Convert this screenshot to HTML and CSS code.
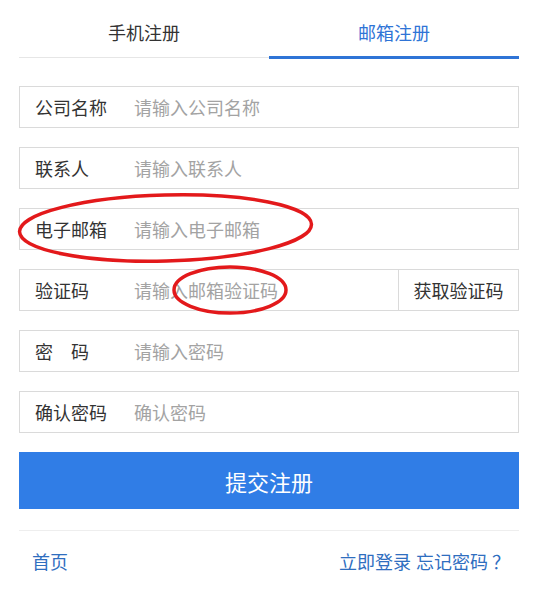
FILE: index.html
```html
<!DOCTYPE html>
<html lang="zh-CN">
    <head>
        <meta charset="UTF-8" />
        <meta name="viewport" content="width=device-width, initial-scale=1.0" />
        <title>注册</title>
        <link rel="stylesheet" href="styles.css">
    </head>

    <body>
        <div class="page">
            <div class="tabs">
                <div class="tab">手机注册</div>
                <div class="tab tab_active">邮箱注册</div>
            </div>

            <form class="form">
                <div class="row">
                    <label class="row_label">公司名称</label>
                    <input class="row_input" type="text" placeholder="请输入公司名称" />
                </div>
                <div class="row">
                    <label class="row_label">联系人</label>
                    <input class="row_input" type="text" placeholder="请输入联系人" />
                </div>
                <div class="row">
                    <label class="row_label">电子邮箱</label>
                    <input class="row_input" type="text" placeholder="请输入电子邮箱" />
                </div>
                <div class="row">
                    <label class="row_label">验证码</label>
                    <input class="row_input" type="text" placeholder="请输入邮箱验证码" />
                    <button class="btn_code" type="button">获取验证码</button>
                </div>
                <div class="row">
                    <label class="row_label">密　码</label>
                    <input class="row_input" type="password" placeholder="请输入密码" />
                </div>
                <div class="row">
                    <label class="row_label">确认密码</label>
                    <input class="row_input" type="password" placeholder="确认密码" />
                </div>

                <button class="btn_submit" type="button">提交注册</button>
            </form>

            <div class="footer">
                <a href="#" class="link">首页</a>
                <div class="links">
                    <a href="#" class="link">立即登录</a>
                    <a href="#" class="link">忘记密码 ？</a>
                </div>
            </div>
        </div>

        <!-- marcações em vermelho por cima da tela -->
        <svg class="marks" width="535" height="609" viewBox="0 0 535 609">
            <ellipse cx="165.5" cy="228" rx="146" ry="33" transform="rotate(-1.5 165.5 228)" />
            <ellipse cx="230" cy="290" rx="56" ry="23" />
        </svg>
    </body>
</html>
```

FILE: styles.css
```css
* {
    box-sizing: border-box;
}

body {
    margin: 0;
    background-color: #fff;
    font-family: "Noto Sans CJK SC", "Noto Sans", sans-serif;
    color: #333;
}

.page {
    padding: 0 16px 0 19px;
}

.tabs {
    display: flex;
    height: 59px;
}

.tab {
    flex: 1;
    height: 58px;
    padding-top: 10px;
    text-align: center;
    font-size: 18px;
    line-height: 44px;
    color: #333;
    border-bottom: 1px solid #e6e6e6;
}
.tab_active {
    height: 59px;
    color: #2f74d6;
    border-bottom: 3px solid #2f74d6;
}

.form {
    display: flex;
    flex-direction: column;
    gap: 19px;
    margin-top: 27px;
}

.row {
    display: flex;
    align-items: stretch;
    height: 42px;
    border: 1px solid #dadada;
}

.row_label {
    width: 114px;
    padding-left: 15px;
    font-size: 18px;
    line-height: 40px;
    color: #333;
}

.row_input {
    flex: 1;
    min-width: 0;
    border: none;
    outline: none;
    padding: 0;
    font-family: inherit;
    font-size: 18px;
    color: #333;
    background: transparent;
}
.row_input::placeholder {
    color: #a3a3a3;
}

.btn_code {
    width: 120px;
    border: none;
    border-left: 1px solid #dadada;
    background-color: #fff;
    font-family: inherit;
    font-size: 18px;
    color: #333;
    padding: 0;
    cursor: pointer;
}

.btn_submit {
    height: 57px;
    border: none;
    background-color: #307de6;
    color: #fff;
    font-family: inherit;
    font-size: 22px;
    cursor: pointer;
}

.footer {
    display: flex;
    justify-content: space-between;
    align-items: center;
    margin-top: 21px;
    padding: 17px 9px 0 13px;
    border-top: 1px solid #eeeeee;
}

.links {
    display: flex;
    gap: 5px;
}

.link {
    font-size: 18px;
    color: #2f6ebf;
    text-decoration: none;
}

.marks {
    position: absolute;
    top: 0;
    left: 0;
    pointer-events: none;
}
.marks ellipse {
    fill: none;
    stroke: #e3191b;
    stroke-width: 3.5;
}
```
